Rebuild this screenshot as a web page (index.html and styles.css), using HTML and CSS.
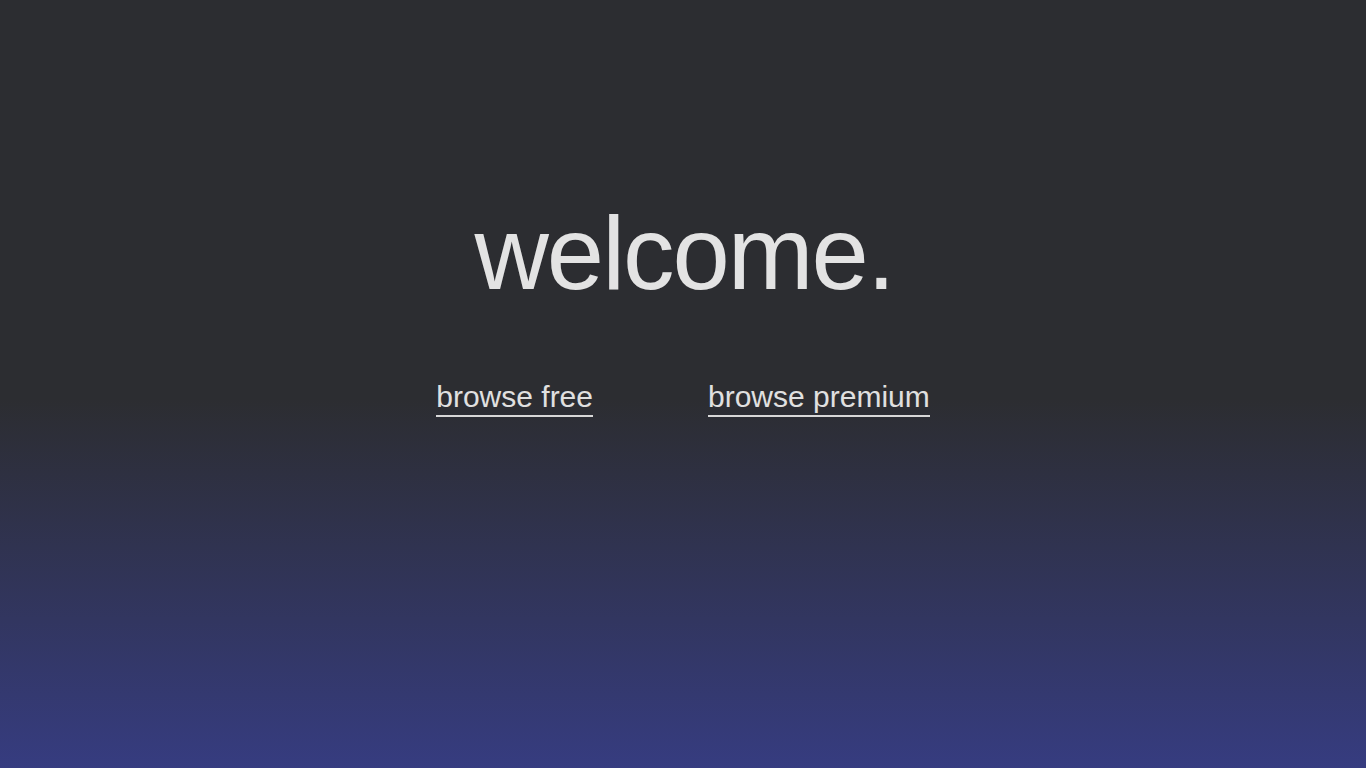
FILE: index.html
```html
<!DOCTYPE html>
<html>
<head>
<meta charset="utf-8">
<link rel="stylesheet" href="styles.css">
</head>
<body>
<main class="hero">
  <h1 class="title">welcome.</h1>
  <nav class="links">
    <a class="link" href="#">browse free</a>
    <a class="link" href="#">browse premium</a>
  </nav>
</main>
</body>
</html>
```
FILE: styles.css
```css
html, body {
  margin: 0;
  padding: 0;
  height: 100%;
}
body {
  background: linear-gradient(to bottom, #2c2d31 0%, #2c2d31 52%, #363c80 100%);
  font-family: "Liberation Sans", Arial, sans-serif;
  color: #e3e3e3;
}
.hero {
  display: flex;
  flex-direction: column;
  align-items: center;
  padding-top: 194px;
}
.title {
  margin: 0;
  font-size: 103px;
  font-weight: 400;
  line-height: 120px;
  letter-spacing: -2px;
  padding-left: 2px;
}
.links {
  display: flex;
  gap: 115px;
  margin-top: 65px;
}
.link {
  color: #e0e0e0;
  font-size: 30px;
  line-height: 36px;
  text-decoration: none;
  border-bottom: 2px solid #d8d8d8;
}
```
